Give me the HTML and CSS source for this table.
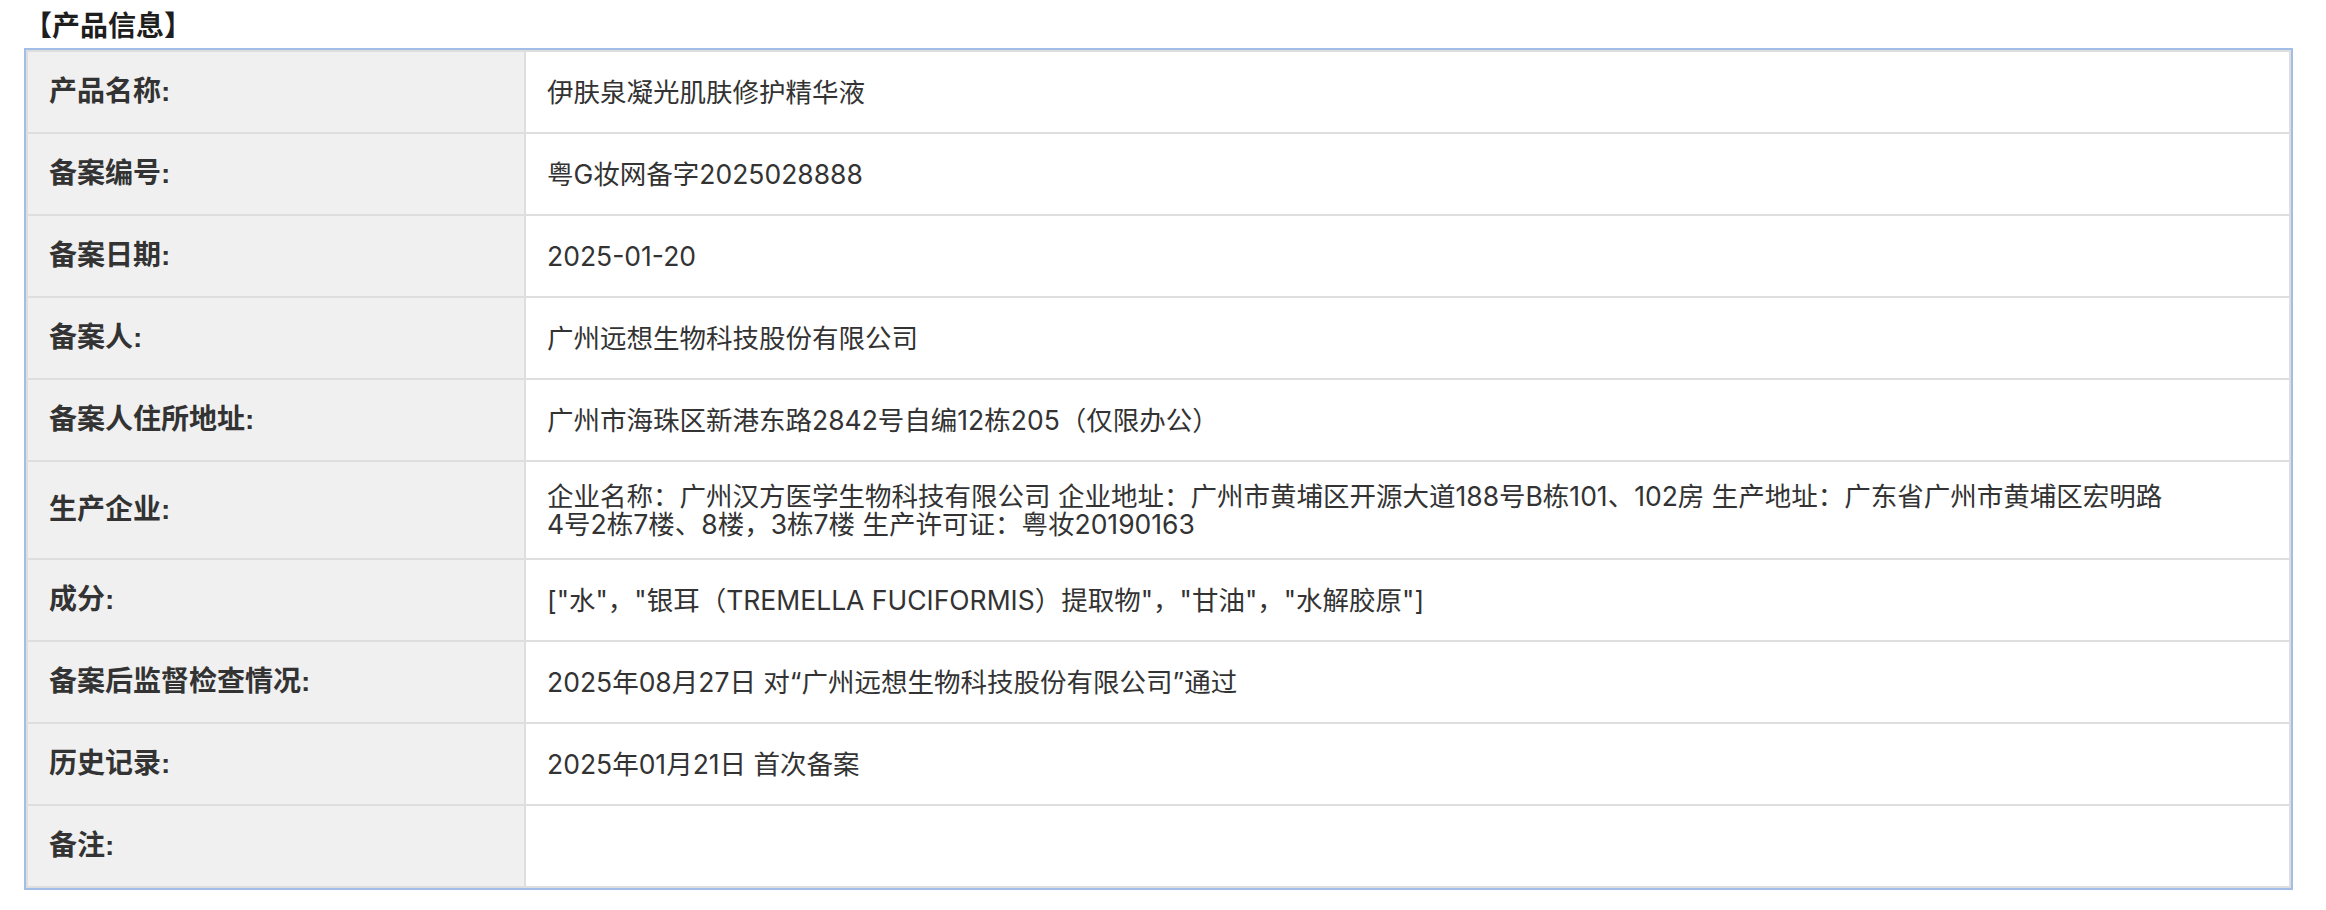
FILE: index.html
```html
<!DOCTYPE html>
<html lang="zh-CN">
<head>
<meta charset="utf-8">
<title>产品信息</title>
<link rel="stylesheet" href="styles.css">
</head>
<body>
<div class="page">
  <div class="title">【产品信息】</div>
  <div class="panel">
    <div class="sheet">
      <div class="label">产品名称:</div>
      <div class="value">伊肤泉凝光肌肤修护精华液</div>
      <div class="label">备案编号:</div>
      <div class="value">粤G妆网备字2025028888</div>
      <div class="label">备案日期:</div>
      <div class="value">2025-01-20</div>
      <div class="label">备案人:</div>
      <div class="value">广州远想生物科技股份有限公司</div>
      <div class="label">备案人住所地址:</div>
      <div class="value">广州市海珠区新港东路2842号自编12栋205（仅限办公）</div>
      <div class="label">生产企业:</div>
      <div class="value">企业名称：广州汉方医学生物科技有限公司 企业地址：广州市黄埔区开源大道188号B栋101、102房 生产地址：广东省广州市黄埔区宏明路<br>4号2栋7楼、8楼，3栋7楼 生产许可证：粤妆20190163</div>
      <div class="label">成分:</div>
      <div class="value">["水"，"银耳（TREMELLA FUCIFORMIS）提取物"，"甘油"，"水解胶原"]</div>
      <div class="label">备案后监督检查情况:</div>
      <div class="value">2025年08月27日 对“广州远想生物科技股份有限公司”通过</div>
      <div class="label">历史记录:</div>
      <div class="value">2025年01月21日 首次备案</div>
      <div class="label">备注:</div>
      <div class="value"></div>
    </div>
  </div>
</div>
</body>
</html>
```
FILE: styles.css
```css
html, body {
  margin: 0;
  padding: 0;
  background: #ffffff;
}

.page {
  padding: 12px 0 0 24px;
  font-family: "Liberation Sans", "Noto Sans CJK SC", sans-serif;
  color: #333333;
}

.title {
  font-size: 28px;
  font-weight: bold;
  line-height: 30px;
  height: 30px;
  margin-bottom: 6px;
  color: #1e1e1e;
}

.panel {
  width: 2269px;
  box-sizing: border-box;
  border: 2px solid #a2bde6;
}

.sheet {
  display: grid;
  grid-template-columns: 496px 1fr;
  gap: 2px;
  background: #dedede;
  border: 2px solid #dedede;
}

.label,
.value {
  box-sizing: border-box;
  min-height: 80px;
  padding: 20px 22px 20px 21px;
  display: flex;
  flex-direction: column;
  justify-content: center;
  align-items: flex-start;
  line-height: 28px;
}

.label {
  background: #f0f0f0;
  font-size: 28px;
  font-weight: bold;
  color: #333333;
}

.value {
  background: #ffffff;
  font-family: "Inter", "Noto Sans CJK SC", sans-serif;
  font-size: 26.5px;
  color: #333333;
}
```
